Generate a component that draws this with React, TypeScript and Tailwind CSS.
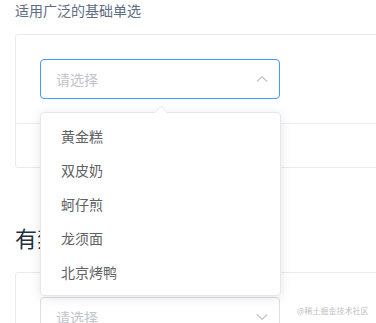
import React from 'react';

const OPTIONS = ['黄金糕', '双皮奶', '蚵仔煎', '龙须面', '北京烤鸭'];

const Chevron = ({ up }: { up?: boolean }) => (
  <svg width="12" height="12" viewBox="0 0 12 12" className={up ? '' : 'rotate-180'}>
    <path d="M1 8.5 L6 3.5 L11 8.5" fill="none" stroke="#c0c4cc" strokeWidth="1.2" />
  </svg>
);

const SelectBox = ({ open }: { open?: boolean }) => (
  <div
    className={`flex h-[40px] w-[240px] items-center justify-between rounded-[4px] border pl-[15px] pr-[11px] ${
      open ? 'border-[#409eff]' : 'border-[#dcdfe6]'
    }`}
  >
    <span className="text-[14px] text-[#c0c4cc]">请选择</span>
    <Chevron up={open} />
  </div>
);

export default function App() {
  return (
    <div
      className="relative h-[323px] w-[376px] overflow-hidden bg-white"
      style={{ fontFamily: '"Noto Sans CJK SC", "Noto Sans", sans-serif' }}
    >
      <p className="ml-[15px] h-[20px] text-[14px] leading-[20px] text-[#5e6d82]">适用广泛的基础单选</p>

      <div className="ml-[15px] mt-[14px] w-[420px] rounded-[3px] border border-[#ebebeb]">
        <div className="p-[24px]">
          <SelectBox open />
        </div>
        <div className="h-[44px] border-t border-[#eaeefb]" />
      </div>

      <h3 className="ml-[15px] mt-[54px] text-[22px] font-normal leading-[30px] text-[#1f2f3d]">有禁用选项</h3>

      <div className="ml-[15px] mt-[20px] w-[420px] rounded-[3px] border border-[#ebebeb]">
        <div className="p-[24px]">
          <SelectBox />
        </div>
      </div>

      {/* dropdown */}
      <div className="absolute left-[40px] top-[112px] w-[241px] rounded-[4px] border border-[#e4e7ed] bg-white py-[6px] shadow-[0_2px_12px_rgba(0,0,0,0.1)]">
        <div className="absolute left-[113px] top-[-7px] h-0 w-0 border-x-[7px] border-b-[7px] border-x-transparent border-b-[#e4e7ed]" />
        <div className="absolute left-[114px] top-[-6px] h-0 w-0 border-x-[6px] border-b-[6px] border-x-transparent border-b-white" />
        {OPTIONS.map((o) => (
          <div key={o} className="h-[34px] px-[20px] text-[14px] leading-[34px] text-[#606266]">
            {o}
          </div>
        ))}
      </div>

      <span className="absolute left-[297px] top-[305px] whitespace-nowrap text-[8px] leading-[12px] text-[#c0c0c0]">
        @稀土掘金技术社区
      </span>
    </div>
  );
}
